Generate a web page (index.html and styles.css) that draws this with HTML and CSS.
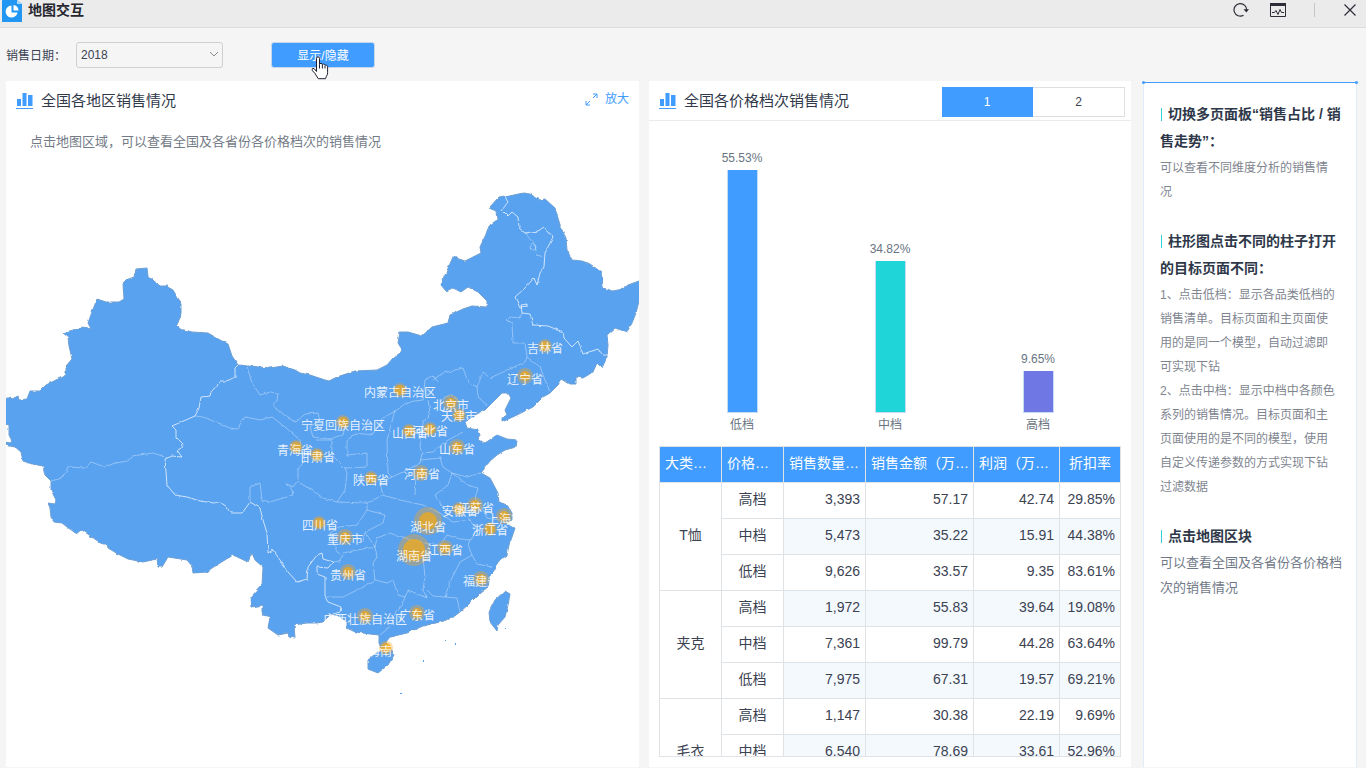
FILE: index.html
```html
<!DOCTYPE html>
<html lang="zh-CN">
<head>
<meta charset="utf-8">
<meta name="viewport" content="width=device-width, initial-scale=1">
<title>地图交互</title>
<link rel="stylesheet" href="styles.css">
</head>
<body>
<header class="titlebar">
  <svg class="logo" width="20" height="22" viewBox="0 0 20 22" aria-hidden="true">
    <path d="M0 0h15l5 4v18H0z" fill="#2196f3"/><path d="M15 0l5 4h-5z" fill="#a9d6fb"/>
    <path d="M9.500 5.500A6 6 0 1 0 15.500 12.500H9.500z" fill="#fff"/><path d="M11.500 5a5.500 5.500 0 0 1 5 5.500h-5z" fill="#fff"/>
  </svg>
  <h1 class="title">地图交互</h1>
  <div class="window-actions">
    <button class="icon-btn" type="button" aria-label="刷新">
      <svg width="16" height="16" viewBox="0 0 16 16"><path d="M10.500 13.300A6.300 6.300 0 1 1 13.600 8.500" fill="none" stroke="#2d2d38" stroke-width="1.200"/><path d="M10.500 7.200h5.500l-2.700 3.300z" fill="#2d2d38"/></svg>
    </button>
    <button class="icon-btn" type="button" aria-label="监控">
      <svg width="18" height="16" viewBox="0 0 18 16"><path d="M1.500 1.500h15v13h-15z" fill="none" stroke="#2d2d38"/><path d="M1 1h16v3H1z" fill="#2d2d38"/><path d="M3 10.500h2.500l1.500-2 2 4 2-5 1.500 3H15" fill="none" stroke="#2d2d38"/></svg>
    </button>
    <span class="divider"></span>
    <button class="icon-btn" type="button" aria-label="关闭">
      <svg width="12" height="12" viewBox="0 0 12 12"><path d="M.5.5l11 11M11.500.5l-11 11" stroke="#2d2d38" stroke-width="1.200"/></svg>
    </button>
  </div>
</header>

<form class="toolbar">
  <label for="year">销售日期：</label>
  <div class="select-wrap">
    <select id="year"><option>2018</option></select>
    <svg class="chevron" width="10" height="6" viewBox="0 0 10 6" aria-hidden="true"><path d="M1 1l4 4 4-4" fill="none" stroke="#8b8b83"/></svg>
  </div>
  <button class="toggle" type="button">显示/隐藏
    <svg class="pointer" width="18" height="24" viewBox="0 0 18 24" aria-hidden="true"><path d="M5.500 15.500V2.500q0-1.700 1.500-1.700t1.500 1.700v6q.2-1.200 1.500-1.100t1.400 1.300q.2-.7 1.400-.6t1.300 1.500q.3-.6 1.300-.4t1.200 1.600v6q0 2-1.300 3.700l-.8 2.200H7.300L4 17.500 1.400 14.600q-1-1.700.6-2.300 1.300-.2 3.500 3.200z" fill="#fff" stroke="#1f2230"/><path d="M8.500 8.500v4M11.400 9v3.500M14 10v2.500" stroke="#1f2230"/></svg>
  </button>
</form>

<main class="board">
  <section class="panel">
    <header class="panel-head">
      <svg class="chart-icon" width="17" height="16" viewBox="0 0 17 16" aria-hidden="true"><path d="M1 6h4v7H1zM6.500 0h4v13h-4zM12 2h4.500v11H12zM0 15h17v1H0z" fill="#419cff"/></svg>
      <h2>全国各地区销售情况</h2>
      <a class="expand" href="#map"><svg width="13" height="13" viewBox="0 0 13 13" aria-hidden="true"><path d="M8 1h4v4M12 1L8 5M5 12H1V8M1 12l4-4" fill="none" stroke="#419cff"/></svg>放大</a>
    </header>
    <p class="hint">点击地图区域，可以查看全国及各省份各价格档次的销售情况</p>
    <svg class="map" id="map" viewBox="6 163 633 604" role="img" aria-label="全国销售地图">
      <defs>
        <filter id="coast" x="-5%" y="-5%" width="110%" height="110%" color-interpolation-filters="sRGB">
          <feTurbulence type="fractalNoise" baseFrequency="0.2" numOctaves="1" seed="4"/>
          <feDisplacementMap in="SourceGraphic" scale="3" xChannelSelector="R" yChannelSelector="G"/>
        </filter>
      </defs>
      <g filter="url(#coast)">
        <g class="land">
          <path d="M0 401L10 397 12 399 18 396 19 400 27 399 30 391 40 391 46 385 66 375 66 366 72 359 69 346 68 337 63 333 83 327 91 329 88 323 92 312 97 299 106 302 119 302 124 299 123 284 126 280 134 277 136 269 147 268 148 276 160 286 166 286 173 290 181 303 181 315 177 325 180 329 192 332 208 333 220 340 228 344 232 356 238 365 270 368 283 366 295 370 300 373 310 375 325 380 329 381 337 377 355 371 377 370 387 365 393 358 403 351 398 343 400 332 408 332 422 336 432 327 448 323 450 315 463 309 472 306 487 307 487 301 478 292 468 287 461 292 453 288 446 291 441 285 445 275 453 257 465 261 481 253 480 247 488 230 490 225 497 220 496 211 489 208 498 198 505 197 523 193 530 194 540 200 545 199 555 208 558 218 561 228 566 238 567 250 572 260 582 261 590 264 601 272 602 278 603 288 613 291 623 289 628 285 639 281 648 278 648 301 639 301 636 313 632 323 627 332 615 328 607 335 608 345 607 357 602 368 597 363 593 372 583 378 576 377 576 384 570 384 562 379 558 385 550 393 543 397 533 407 517 415 502 422 502 418 507 415 505 410 511 398 508 393 502 393 495 400 485 410 475 415 465 422 467 428 478 430 480 435 478 440 485 443 497 435 507 439 517 440 516 447 505 450 497 455 490 461 481 473 490 478 498 493 499 502 507 505 512 513 512 520 505 523 515 528 512 537 509 545 507 555 498 562 496 568 490 576 488 587 480 593 470 603 460 612 452 618 440 622 423 626 407 633 390 637 386 642 387 647 381 648 379 643 379 635 370 634 355 632 347 628 347 622 337 615 330 615 323 622 317 623 307 623 294 625 295 638 289 637 288 633 278 635 268 628 270 617 263 615 263 605 252 607 251 597 262 585 263 567 255 560 252 553 248 562 233 555 220 563 212 568 207 572 193 573 192 566 187 560 168 557 162 567 158 567 157 559 143 562 128 559 118 554 108 548 107 544 102 544 82 530 77 534 67 527 62 523 54 522 51 517 50 508 48 503 55 504 56 500 51 490 51 481 45 475 43 466 32 464 23 461 21 452 15 447 0 444 12 441 9 435 9 425 0 423Z"/>
          <path d="M368 660V669L378 673 388 665 394 655 392 650 383 650 375 654Z"/>
          <path d="M505 591L510 594 508 605 505 617 498 625 497 631 490 622 489 612 495 600Z"/>
        </g>
        <path class="border strong" d="M238 365L235 368 235 377 225 382 220 382 211 392 210 396 201 397 199 408 195 416 172 426 176 430 176 437 183 444 182 448 177 450 182 457 172 456 165 459 166 472 167 485 175 495 187 497 200 501 213 503 220 502 227 507 230 513 242 513 248 505 250 502 260 508 263 520 267 533 268 553 273 550 280 560 288 572 297 582 307 579 308 567 317 555 322 553 323 559 333 562 328 568 317 567 317 574 325 577 325 597 328 602 341 607 340 612 330 615"/>
        <path class="border strong" d="M505 197L508 202 502 210 508 216 512 212 518 217 519 228 525 233 538 231 544 227 553 237 545 253 544 267 540 273 537 285 534 278 525 288 515 297 520 308 527 307 527 304 521 305 522 313 530 314 533 325 548 326 563 332 564 338 572 347 578 341 583 354 598 349 603 355 608 355"/>
        <g class="border">
          <path d="M51 481L62 478 68 467 85 468 91 462 105 467 115 463 128 461 132 456 153 453 165 457"/>
          <path d="M195 416L203 417 218 423 230 428 237 429 245 417 260 420 272 417 285 427 300 440 302 453 305 460 298 470 298 480 293 487 285 482 292 490 293 495 280 499 270 502 262 500 260 483 250 487 250 502"/>
          <path d="M247 367L252 383 260 395 270 392 278 393 277 401 272 405 288 418 296 422 305 414 318 413 320 420 310 427 313 437 330 439 343 435 345 427M317 440L332 440 332 455 345 468 347 473 345 490 337 502 323 498 315 492 300 483"/>
          <path d="M345 468L367 467 367 453 347 455 347 440 357 433 372 435 383 418 397 410 407 402 423 400 425 380 433 375 438 382M395 410L387 440 388 473 392 477 380 483 383 495 367 503 337 502M392 477L407 470 420 463 422 453 420 447 423 423 430 413 428 400"/>
          <path d="M367 503L367 510 357 525 340 527 330 533 337 552 343 555 339 561 333 562M367 510L385 515 383 523 365 532 375 547 357 550 343 553M375 547L377 538 390 533 403 538 425 543 440 545 447 535 460 539 470 540"/>
          <path d="M383 495L400 500 423 505 440 513 453 522 472 520M420 460L440 458 443 467 452 473 448 485 435 495 442 507 453 514M452 473L468 485 478 488 475 498 483 510 487 518 500 520M452 473L467 477 481 473M422 453L433 452 448 440 463 432"/>
          <path d="M433 380L443 373 463 368 468 382 477 387 478 397 487 405M477 387L483 372 490 378 525 362 527 357 540 367 545 380 550 392M527 357L525 343 513 343 512 323 507 320 510 317 520 318 522 313M525 233L535 245 537 255 544 257"/>
          <path d="M530 247L532 244 536 246 535 250 531 250ZM440 402L444 398 450 395 457 399 461 405M466 417L473 422M375 547L377 557 373 563 375 580M325 597L343 597 363 587 375 580 387 583 393 580 398 595 405 597 402 605 393 617 392 625 380 635"/>
          <path d="M405 597L408 590 427 598 423 590 425 577 422 547M427 590L433 596 445 597 457 598 460 612M445 597L450 582 460 562 472 555 477 564 492 567M472 555L468 545 470 540 477 530 468 518M415 495L416 475M365 532L363 541"/>
        </g>
      </g>
      <path class="islets" d="M423 660h1v2h-1zM400 693h2v1h-2zM445 640h1v1h-1zM455 643h1v2h-1zM505 628h1v1h-1z"/>
      <g class="halo">
        <circle cx="545" cy="346" r="7"/><circle cx="525" cy="376" r="8"/><circle cx="400" cy="390" r="7"/><circle cx="451" cy="403" r="8"/><circle cx="459" cy="415" r="7"/><circle cx="343" cy="422" r="7"/><circle cx="430" cy="429" r="7"/><circle cx="409" cy="431" r="7"/><circle cx="457" cy="447" r="8"/><circle cx="296" cy="447" r="7"/><circle cx="317" cy="455" r="7"/><circle cx="371" cy="478" r="7"/><circle cx="421" cy="473" r="8"/><circle cx="475" cy="505" r="8"/><circle cx="459" cy="509" r="7"/><circle cx="504" cy="516" r="8"/><circle cx="490" cy="529" r="7"/><circle cx="319" cy="523" r="7"/><circle cx="345" cy="537" r="8"/><circle cx="445" cy="548" r="8"/><circle cx="348" cy="572" r="8"/><circle cx="481" cy="579" r="8"/><circle cx="365" cy="616" r="8"/><circle cx="417" cy="613" r="8"/><circle cx="386" cy="648" r="7"/><circle cx="428" cy="521" r="14"/><circle cx="414" cy="550" r="16"/>
      </g>
      <g class="dot">
        <circle cx="545" cy="346" r="5"/><circle cx="525" cy="376" r="5"/><circle cx="400" cy="390" r="5"/><circle cx="451" cy="403" r="5"/><circle cx="459" cy="415" r="5"/><circle cx="343" cy="422" r="5"/><circle cx="430" cy="429" r="5"/><circle cx="409" cy="431" r="5"/><circle cx="457" cy="447" r="5"/><circle cx="296" cy="447" r="5"/><circle cx="317" cy="455" r="5"/><circle cx="371" cy="478" r="5"/><circle cx="421" cy="473" r="5"/><circle cx="475" cy="505" r="5"/><circle cx="459" cy="509" r="5"/><circle cx="504" cy="516" r="5"/><circle cx="490" cy="529" r="5"/><circle cx="319" cy="523" r="5"/><circle cx="345" cy="537" r="5"/><circle cx="445" cy="548" r="5"/><circle cx="348" cy="572" r="5"/><circle cx="481" cy="579" r="5"/><circle cx="365" cy="616" r="5"/><circle cx="417" cy="613" r="5"/><circle cx="386" cy="648" r="5"/><circle cx="428" cy="521" r="9"/><circle cx="414" cy="550" r="11"/>
      </g>
      <g class="province">
        <text x="545" y="353">吉林省</text><text x="525" y="384">辽宁省</text><text x="400" y="397">内蒙古自治区</text><text x="451" y="410">北京市</text><text x="459" y="421">天津市</text><text x="343" y="430">宁夏回族自治区</text><text x="430" y="436">河北省</text><text x="410" y="438">山西省</text><text x="457" y="454">山东省</text><text x="295" y="455">青海省</text><text x="317" y="462">甘肃省</text><text x="371" y="485">陕西省</text><text x="422" y="479">河南省</text><text x="476" y="513">江苏省</text><text x="460" y="516">安徽省</text><text x="505" y="524">上海市</text><text x="490" y="535">浙江省</text><text x="428" y="532">湖北省</text><text x="320" y="530">四川省</text><text x="345" y="544">重庆市</text><text x="414" y="561">湖南省</text><text x="445" y="555">江西省</text><text x="348" y="580">贵州省</text><text x="481" y="586">福建省</text><text x="365" y="624">广西壮族自治区</text><text x="417" y="620">广东省</text><text x="386" y="656">海南省</text>
      </g>
    </svg>
  </section>

  <section class="panel">
    <header class="panel-head ruled">
      <svg class="chart-icon" width="17" height="16" viewBox="0 0 17 16" aria-hidden="true"><path d="M1 6h4v7H1zM6.500 0h4v13h-4zM12 2h4.500v11H12zM0 15h17v1H0z" fill="#419cff"/></svg>
      <h2>全国各价格档次销售情况</h2>
      <div class="tabs"><button class="tab active" type="button">1</button><button class="tab" type="button">2</button></div>
    </header>
    <div class="chart">
      <div class="col"><span class="value">55.53%</span><span class="bar low" style="height:243px"></span><span class="name">低档</span></div>
      <div class="col"><span class="value">34.82%</span><span class="bar mid" style="height:152px"></span><span class="name">中档</span></div>
      <div class="col"><span class="value">9.65%</span><span class="bar high" style="height:42px"></span><span class="name">高档</span></div>
    </div>
    <div class="table-wrap">
      <table class="data">
        <colgroup><col class="c-key"><col class="c-key"><col class="c-qty"><col class="c-amt"><col class="c-profit"><col class="c-rate"></colgroup>
        <thead><tr><th>大类…</th><th>价格…</th><th>销售数量…</th><th>销售金额（万…</th><th>利润（万…</th><th class="mid-text">折扣率</th></tr></thead>
        <tbody>
          <tr><th rowspan="3">T恤</th><th>高档</th><td>3,393</td><td>57.17</td><td>42.74</td><td>29.85%</td></tr>
          <tr><th>中档</th><td>5,473</td><td>35.22</td><td>15.91</td><td>44.38%</td></tr>
          <tr><th>低档</th><td>9,626</td><td>33.57</td><td>9.35</td><td>83.61%</td></tr>
          <tr><th rowspan="3">夹克</th><th>高档</th><td>1,972</td><td>55.83</td><td>39.64</td><td>19.08%</td></tr>
          <tr><th>中档</th><td>7,361</td><td>99.79</td><td>44.28</td><td>63.64%</td></tr>
          <tr><th>低档</th><td>7,975</td><td>67.31</td><td>19.57</td><td>69.21%</td></tr>
          <tr><th rowspan="3">毛衣</th><th>高档</th><td>1,147</td><td>30.38</td><td>22.19</td><td>9.69%</td></tr>
          <tr><th>中档</th><td>6,540</td><td>78.69</td><td>33.61</td><td>52.96%</td></tr>
          <tr><th></th><td></td><td></td><td></td><td></td></tr>
        </tbody>
      </table>
    </div>
  </section>

  <aside class="notes">
    <h3>切换多页面板“销售占比 / 销售走势”：</h3>
    <p>可以查看不同维度分析的销售情况</p>
    <h3>柱形图点击不同的柱子打开的目标页面不同：</h3>
    <p>1、点击低档：显示各品类低档的销售清单。目标页面和主页面使用的是同一个模型，自动过滤即可实现下钻</p>
    <p>2、点击中档：显示中档中各颜色系列的销售情况。目标页面和主页面使用的是不同的模型，使用自定义传递参数的方式实现下钻过滤数据</p>
    <h3>点击地图区块</h3>
    <p class="wide">可以查看全国及各省份各价格档次的销售情况</p>
  </aside>
</main>
</body>
</html>
```
FILE: styles.css
```css
* { box-sizing: border-box; }
body {
  margin: 0;
  height: 100vh;
  display: flex;
  flex-direction: column;
  background: #f5f5f5;
  color: #3b4252;
  font: 12px/16px "Liberation Sans", "Noto Sans CJK SC", sans-serif;
}
h1, h2, h3, p { margin: 0; }
button, select { font: inherit; color: inherit; }
svg { display: block; }

.titlebar {
  display: flex;
  align-items: flex-start;
  height: 28px;
  padding: 0 10px 0 2px;
  background: #ebebeb;
  border-bottom: 1px solid #dcdcdc;
}
.title { margin-left: 6px; font-size: 14px; line-height: 20px; color: #26262e; }
.window-actions { display: flex; align-items: center; height: 20px; margin-left: auto; }
.icon-btn { padding: 0; border: 0; background: none; }
.icon-btn + .icon-btn { margin-left: 20px; }
.divider { width: 1px; height: 14px; margin: 0 29px 0 27px; background: #c6c6c6; }

.toolbar { display: flex; align-items: center; height: 53px; flex: none; padding-left: 6px; }
.toolbar label { width: 70px; padding-top: 2px; }
.select-wrap { position: relative; width: 147px; }
.select-wrap select {
  display: block;
  width: 100%;
  height: 26px;
  padding: 0 4px;
  border: 1px solid #cfcfcf;
  border-radius: 3px;
  background: #f5f5f5;
  appearance: none;
}
.chevron { position: absolute; right: 4px; top: 9px; }
.toggle {
  position: relative;
  width: 104px;
  height: 26px;
  margin-left: 48px;
  padding: 2px 0 0;
  border: 1px solid #c6d7ea;
  border-radius: 3px;
  background: #419cff;
  color: #fff;
}
.pointer { position: absolute; left: 39px; top: 13px; }

.board {
  flex: 1;
  min-height: 0;
  display: grid;
  grid-template-columns: 633fr 482fr 216fr;
  grid-template-rows: minmax(0, 1fr);
  gap: 10px;
  padding: 0 9px 1px 6px;
}
.panel { display: flex; flex-direction: column; min-width: 0; min-height: 0; background: #fff; }
.panel-head { display: flex; align-items: center; flex: none; height: 40px; padding: 0 6px 0 10px; }
.panel-head.ruled { border-bottom: 1px solid #ebebeb; }
.panel-head h2 { margin-left: 8px; font-size: 15px; font-weight: 400; color: #31394a; }
.expand {
  display: flex;
  align-items: center;
  gap: 7px;
  margin-left: auto;
  padding: 0 4px 4px 0;
  color: #419cff;
  text-decoration: none;
}
.hint { padding: 13px 24px; font-size: 13px; color: #737b87; }

.map { flex: 1; width: 100%; min-height: 0; }
.land { fill: #59a2f0; stroke: #6e9fd2; stroke-width: 1; }
.islets { fill: #59a2f0; }
.border { fill: none; stroke: #fff; stroke-opacity: .35; }
.border.strong { stroke-opacity: .7; }
.halo { fill: #f5a623; fill-opacity: .38; }
.dot { fill: #f0a818; fill-opacity: .75; }
.province { fill: #fff; fill-opacity: .85; font-size: 12px; text-anchor: middle; }

.tabs { display: flex; margin-left: auto; padding-top: 2px; }
.tab { width: 92px; height: 30px; padding: 0; border: 1px solid #dddfe2; border-left: 0; background: #fff; }
.tab.active { width: 91px; border-color: #419cff; background: #419cff; color: #fff; }

.chart { display: flex; flex: none; align-items: flex-end; height: 325px; padding: 0 19px 13px; color: #697482; }
.col { display: flex; flex: 1; flex-direction: column; align-items: center; }
.value { margin-bottom: 4px; }
.bar { width: 31px; border: 1px solid #c4dcf6; border-top: 0; }
.low { background: #419cff; }
.mid { background: #1fd5d8; }
.high { background: #6f77e5; }
.name { margin-top: 4px; }

.table-wrap {
  flex: 1;
  min-height: 0;
  margin: 0 10px 10px;
  border-bottom: 1px solid #dfe2e6;
  overflow-y: auto;
  scrollbar-width: none;
}
.data { width: 100%; border-collapse: collapse; table-layout: fixed; font-size: 14px; }
.c-key { width: 62px; }
.c-qty { width: 82px; }
.c-amt { width: 108px; }
.c-profit { width: 86px; }
.c-rate { width: 61px; }
.data th, .data td { height: 36px; padding: 0 5px 4px; border: 1px solid #e0e3e6; font-weight: 400; }
.data td { text-align: right; }
.data thead th { background: #419cff; color: #fff; text-align: left; white-space: nowrap; }
.data thead .mid-text { text-align: center; }
.data tbody tr:nth-child(even) td { background: #f4f9fe; }

.notes {
  position: relative;
  margin: 1px 0 0 2px;
  padding: 18px 14px 0 16px;
  background: #fff;
  border: solid #e1ecf8;
  border-width: 0 1px;
  border-top: 1px solid #419cff;
}
.notes::before, .notes::after {
  content: "";
  position: absolute;
  top: -2px;
  width: 3px;
  height: 3px;
  border-radius: 50%;
  background: #419cff;
}
.notes::before { left: -2px; }
.notes::after { right: -2px; }
.notes h3 { font-size: 14px; line-height: 27px; color: #2e3849; }
.notes h3::before { content: ""; display: inline-block; width: 1px; height: 13px; margin: 0 6px 0 1px; background: #2fd3d8; vertical-align: -2px; }
.notes p { padding-right: 6px; line-height: 24px; color: #808590; }
.notes h3 + p { margin-top: 1px; }
.notes p + h3 { margin-top: 24px; }
.notes h3 + .wide { margin-top: 0; padding-right: 0; font-size: 13px; line-height: 25px; color: #707988; }
```
